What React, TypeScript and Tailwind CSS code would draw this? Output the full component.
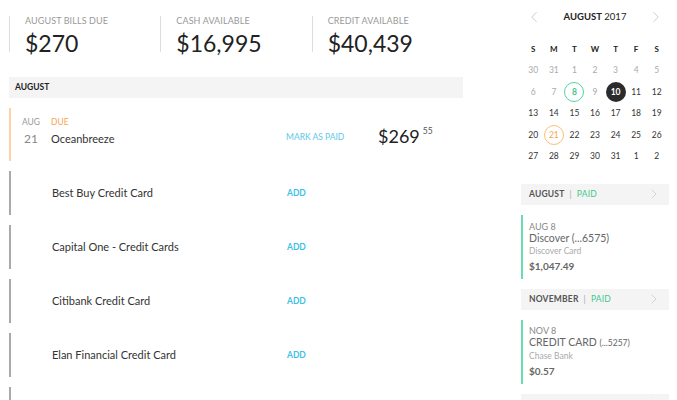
import { ChevronLeft, ChevronRight } from "lucide-react";

const stats = [
  { label: "August Bills Due", value: "$270" },
  { label: "Cash Available", value: "$16,995" },
  { label: "Credit Available", value: "$40,439" },
];

const bills = [
  "Best Buy Credit Card",
  "Capital One - Credit Cards",
  "Citibank Credit Card",
  "Elan Financial Credit Card",
  "",
];

const weeks = [
  [30, 31, 1, 2, 3, 4, 5],
  [6, 7, 8, 9, 10, 11, 12],
  [13, 14, 15, 16, 17, 18, 19],
  [20, 21, 22, 23, 24, 25, 26],
  [27, 28, 29, 30, 31, 1, 2],
];

const paid = [
  { month: "November", date: "NOV 8", name: "CREDIT CARD", acct: "(...5257)", bank: "Chase Bank", amount: "$0.57" },
];

function dayClass(w: number, d: number, n: number) {
  if (w === 1 && n === 8) return "border border-[#4fd6a0] text-[#3fc58e] font-bold";
  if (w === 1 && n === 10) return "bg-[#2b2b2b] text-white font-bold";
  if (w === 3 && n === 21) return "border border-[#fbbf7a] text-[#f5a94f]";
  if (w === 0 || (w === 1 && d < 4)) return "text-[#aaa]";
  return "text-[#333]";
}

function PaidBar({ month }: { month: string }) {
  return (
    <div className="h-[21px] bg-[#f4f4f4] flex items-center justify-between pl-[8px] pr-[7px]">
      <div className="text-[8.5px] tracking-[0.2px]">
        <span className="font-bold text-[#555]">{month.toUpperCase()}</span>
        <span className="text-[#aaa] mx-[5px]">|</span>
        <span className="text-[#3fc98e]">PAID</span>
      </div>
      <ChevronRight size={16} strokeWidth={1} className="text-[#c4c4c4]" />
    </div>
  );
}

export default function App() {
  return (
    <div className="w-[677px] h-[400px] overflow-hidden bg-white flex font-['Lato',sans-serif]">
      {/* Left column */}
      <div className="w-[454px] ml-[9px]">
        <div className="flex pt-[16px] h-[77px]">
          {stats.map((s) => (
            <div key={s.label} className="w-[152px] h-[36px] border-l border-[#ddd] pl-[15px]">
              <div className="text-[9px] leading-[10px] uppercase text-[#999] tracking-[0.1px]">{s.label}</div>
              <div className="text-[23px] leading-[23px] mt-[6px] text-[#222]">{s.value}</div>
            </div>
          ))}
        </div>

        <div className="h-[21px] bg-[#f4f4f4] flex items-center pl-[6px] text-[8.5px] font-bold text-[#222]">
          AUGUST
        </div>

        {/* Due bill */}
        <div className="mt-[10px] h-[53px] border-l-2 border-[#fcd3a5] flex items-start pt-[9px]">
          <div className="w-[40px] pl-[11px]">
            <div className="text-[8.5px] text-[#999] leading-[10px]">AUG</div>
            <div className="text-[12px] text-[#888] leading-[14px] mt-[5px] ml-[2px]">21</div>
          </div>
          <div className="w-[235px]">
            <div className="text-[8.5px] text-[#f7a64f] leading-[10px]">DUE</div>
            <div className="text-[11px] text-[#333] leading-[14px] mt-[5px]">Oceanbreeze</div>
          </div>
          <div className="w-[92px] text-[8.5px] text-[#5cc8ea] mt-[14px]">MARK AS PAID</div>
          <div className="flex items-start text-[#222] mt-[9px]">
            <span className="text-[18px] leading-[20px]">$269</span>
            <span className="text-[8.5px] text-[#555] ml-[3px] leading-[10px]">55</span>
          </div>
        </div>

        {bills.map((b, i) => (
          <div key={i} className="mt-[10px] h-[44px] border-l-2 border-[#aaa] flex items-center">
            <div className="w-[276px] pl-[41px] text-[11px] text-[#333]">{b}</div>
            {b && <div className="text-[8.5px] font-bold text-[#3ebfe6]">ADD</div>}
          </div>
        ))}
      </div>

      {/* Sidebar */}
      <div className="w-[148px] ml-[58px]">
        <div className="flex items-center justify-between h-[20px] mt-[7px] px-[4px]">
          <ChevronLeft size={18} strokeWidth={1} className="text-[#bbb]" />
          <div className="text-[9.5px] text-[#222]">
            <span className="font-bold">AUGUST</span> 2017
          </div>
          <ChevronRight size={18} strokeWidth={1} className="text-[#bbb]" />
        </div>
        <div className="grid grid-cols-7 mt-[12px] px-[2px] text-[8px] font-bold text-[#222]">
          {["S", "M", "T", "W", "T", "F", "S"].map((d, i) => (
            <div key={i} className="h-[20px] flex items-center justify-center">{d}</div>
          ))}
        </div>
        <div className="px-[2px] mt-[1px]">
          {weeks.map((w, wi) => (
            <div key={wi} className="grid grid-cols-7 h-[21.5px]">
              {w.map((n, di) => (
                <div key={di} className="flex items-center justify-center">
                  <div className={`w-[20px] h-[20px] rounded-full flex items-center justify-center text-[8.5px] ${dayClass(wi, di, n)}`}>
                    {n}
                  </div>
                </div>
              ))}
            </div>
          ))}
        </div>

        <div className="mt-[16px]">
          <PaidBar month="August" />
          <div className="mt-[10px] h-[64px] border-l-2 border-[#6ddbb0] pl-[6px] flex flex-col justify-center">
            <div className="text-[9px] text-[#888] leading-[11px]">AUG 8</div>
            <div className="text-[10.5px] text-[#666] leading-[13px]">Discover (...6575)</div>
            <div className="text-[8.5px] text-[#aaa] leading-[13px]">Discover Card</div>
            <div className="text-[10px] font-bold text-[#666] leading-[13px] mt-[2px]">$1,047.49</div>
          </div>
        </div>

        {paid.map((p) => (
          <div key={p.month} className="mt-[10px]">
            <PaidBar month={p.month} />
            <div className="mt-[10px] h-[64px] border-l-2 border-[#6ddbb0] pl-[6px] flex flex-col justify-center">
              <div className="text-[9px] text-[#888] leading-[11px]">{p.date}</div>
              <div className="text-[10.5px] text-[#666] leading-[13px]">
                {p.name} <span className="text-[8.5px]">{p.acct}</span>
              </div>
              <div className="text-[8.5px] text-[#aaa] leading-[13px]">{p.bank}</div>
              <div className="text-[10px] font-bold text-[#666] leading-[13px] mt-[2px]">{p.amount}</div>
            </div>
          </div>
        ))}
        <div className="mt-[10px]">
          <PaidBar month="January" />
        </div>
      </div>
    </div>
  );
}
